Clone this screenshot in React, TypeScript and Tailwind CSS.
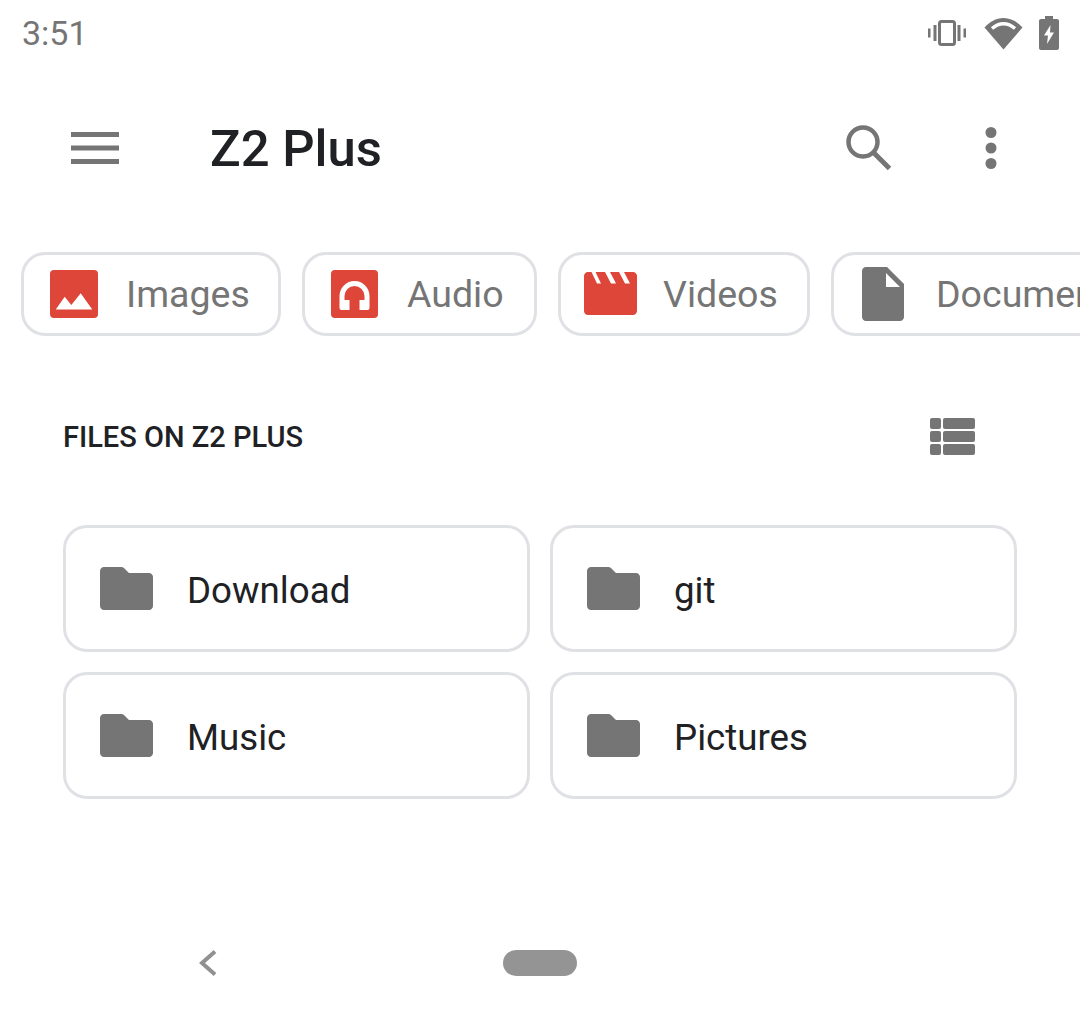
import React from "react";

const FolderIcon = () => (
  <svg width="53" height="43" viewBox="0 0 53 43" className="shrink-0">
    <path d="M4 0h17c1.500 0 2.500.500 3.500 1.500L29 6h20c2.200 0 4 1.800 4 4v29c0 2.200-1.800 4-4 4H4c-2.200 0-4-1.800-4-4V4c0-2.200 1.800-4 4-4z" fill="#757575" />
  </svg>
);

const ImagesIcon = () => (
  <svg width="48" height="48" viewBox="0 0 48 48" className="shrink-0">
    <rect width="48" height="48" rx="4" fill="#dd4639" />
    <path d="M5.700 39.500 14.700 26.700 21.300 35 30.700 23.300 42.300 39.500z" fill="#fff" />
  </svg>
);

const AudioIcon = () => (
  <svg width="47" height="48" viewBox="0 0 47 48" className="shrink-0">
    <rect width="47" height="48" rx="4" fill="#dd4639" />
    <path d="M8.500 38V26a15 15 0 0 1 30 0v12a2 2 0 0 1-2 2h-8V30h5v-4a10 10 0 0 0-20 0v4h5v10h-8a2 2 0 0 1-2-2z" fill="#fff" />
  </svg>
);

const VideosIcon = () => (
  <svg width="53" height="44" viewBox="0 0 53 44" className="shrink-0">
    <path d="M4 0h3.500L13 11.500h4L11.500 0H21l6 11.500h5L26 0h9l6 11.500h5L40 0h9c2.200 0 4 1.800 4 4v35c0 2.200-1.800 4-4 4H4c-2.200 0-4-1.800-4-4V4c0-2.200 1.800-4 4-4z" fill="#dd4639" />
  </svg>
);

const DocumentIcon = () => (
  <svg width="42" height="54" viewBox="0 0 42 54" className="shrink-0">
    <path d="M4 0h21l17 17v33c0 2.200-1.800 4-4 4H4c-2.200 0-4-1.800-4-4V4c0-2.200 1.800-4 4-4zm20 6v14h14z" fill="#757575" fillRule="evenodd" />
  </svg>
);

const chips = [
  { label: "Images", icon: <ImagesIcon />, className: "w-[260px] pl-[26px] gap-[28px]" },
  { label: "Audio", icon: <AudioIcon />, className: "w-[235px] pl-[26px] gap-[29px]" },
  { label: "Videos", icon: <VideosIcon />, className: "w-[252px] pl-[23px] gap-[26px]" },
  { label: "Documents", icon: <DocumentIcon />, className: "w-[300px] pl-[28px] gap-[32px]" },
];

const folders = ["Download", "git", "Music", "Pictures"];

export default function App() {
  return (
    <div className="w-[1080px] h-[1026px] bg-white overflow-hidden flex flex-col font-['Roboto',sans-serif]">
      {/* status bar */}
      <div className="h-[66px] flex items-center justify-between pl-[22px] pr-[21px] shrink-0">
        <span className="text-[34px] text-[#757575] leading-none">3:51</span>
        <div className="flex items-center">
          <svg width="38" height="26" viewBox="0 0 38 26" className="mr-[18px]">
            <rect x="11.500" y="1.500" width="15" height="23" rx="2" fill="none" stroke="#757575" strokeWidth="3" />
            <path d="M0 8.500h2.500v9H0zM5.500 5h3v16h-3zM29.500 5h3v16h-3zM35.500 8.500H38v9h-2.500z" fill="#757575" />
          </svg>
          <svg width="39" height="33" viewBox="0 0 38 33" className="mr-[16px]">
            <path d="M19 32.500 0 10.500C5 5 11.500 1 19 1s14 4 19 9.500z" fill="#757575" />
            <path d="M7.500 11.500C11 8.500 14.800 6.800 19 6.800s8 1.700 11.500 4.700" fill="none" stroke="#fff" strokeWidth="3.500" />
          </svg>
          <svg width="20" height="34" viewBox="0 0 20 34">
            <path d="M6 0h8v3h4c1.100 0 2 .9 2 2v27c0 1.100-.9 2-2 2H2c-1.100 0-2-.9-2-2V5c0-1.100.9-2 2-2h4z" fill="#757575" />
            <path d="M11.500 9 5 19.500h4L8 28l7-11.500h-4z" fill="#fff" />
          </svg>
        </div>
      </div>

      {/* toolbar */}
      <div className="h-[164px] flex items-center pl-[71px] shrink-0">
        <svg width="48" height="32" viewBox="0 0 48 32" className="shrink-0">
          <path d="M0 0h48v5H0zM0 13.500h48v5H0zM0 27h48v5H0z" fill="#757575" />
        </svg>
        <h1 className="ml-[91px] mt-[2px] text-[50.800px] font-medium text-[#202124] leading-none">Z2 Plus</h1>
        <div className="ml-auto flex items-center pr-[83px]">
          <svg width="46" height="46" viewBox="0 0 46 46" className="mr-[93px]">
            <circle cx="17" cy="17" r="14.500" fill="none" stroke="#757575" strokeWidth="4.500" />
            <path d="M27 27 43.500 43.500" stroke="#757575" strokeWidth="5" />
          </svg>
          <svg width="12" height="42" viewBox="0 0 12 42">
            <circle cx="6" cy="5.500" r="5.500" fill="#757575" />
            <circle cx="6" cy="21" r="5.500" fill="#757575" />
            <circle cx="6" cy="36.500" r="5.500" fill="#757575" />
          </svg>
        </div>
      </div>

      {/* category chips */}
      <div className="flex gap-[21px] pl-[21px] mt-[22px] shrink-0">
        {chips.map((chip) => (
          <div
            key={chip.label}
            className={`h-[84px] shrink-0 flex items-center rounded-[24px] border-[3px] border-[#dfe1e5] ${chip.className}`}
          >
            {chip.icon}
            <span className="text-[37.500px] text-[#757575] leading-none whitespace-nowrap mt-[2px]">{chip.label}</span>
          </div>
        ))}
      </div>

      {/* section header */}
      <div className="flex items-center justify-between pl-[63px] pr-[105px] mt-[79px] h-[46px] shrink-0">
        <span className="text-[29px] font-medium text-[#202124] leading-none mb-[2px]">FILES ON Z2 PLUS</span>
        <svg width="45" height="37" viewBox="0 0 45 37" className="mb-[3px]">
          <rect x="0" y="0" width="11" height="11" rx="2" fill="#757575" />
          <rect x="0" y="13" width="11" height="11" rx="2" fill="#757575" />
          <rect x="0" y="26" width="11" height="11" rx="2" fill="#757575" />
          <rect x="13" y="0" width="32" height="11" rx="2" fill="#757575" />
          <rect x="13" y="13" width="32" height="11" rx="2" fill="#757575" />
          <rect x="13" y="26" width="32" height="11" rx="2" fill="#757575" />
        </svg>
      </div>

      {/* folders */}
      <div className="grid grid-cols-[467px_467px] gap-x-[20px] gap-y-[20px] pl-[63px] mt-[64px]">
        {folders.map((name) => (
          <div
            key={name}
            className="h-[127px] flex items-center pl-[34px] gap-[34px] rounded-[24px] border-[3px] border-[#dfe1e5]"
          >
            <FolderIcon />
            <span className="text-[36.700px] text-[#202124] leading-none mt-[6px]">{name}</span>
          </div>
        ))}
      </div>

      {/* nav bar */}
      <div className="mt-[151px] h-[26px] flex items-center shrink-0">
        <svg width="18" height="26" viewBox="0 0 18 26" className="ml-[199px]">
          <path d="M16 1.500 3 13l13 11.500" fill="none" stroke="#919191" strokeWidth="4" />
        </svg>
        <div className="ml-[286px] w-[74px] h-[26px] rounded-full bg-[#949494]" />
      </div>
    </div>
  );
}
